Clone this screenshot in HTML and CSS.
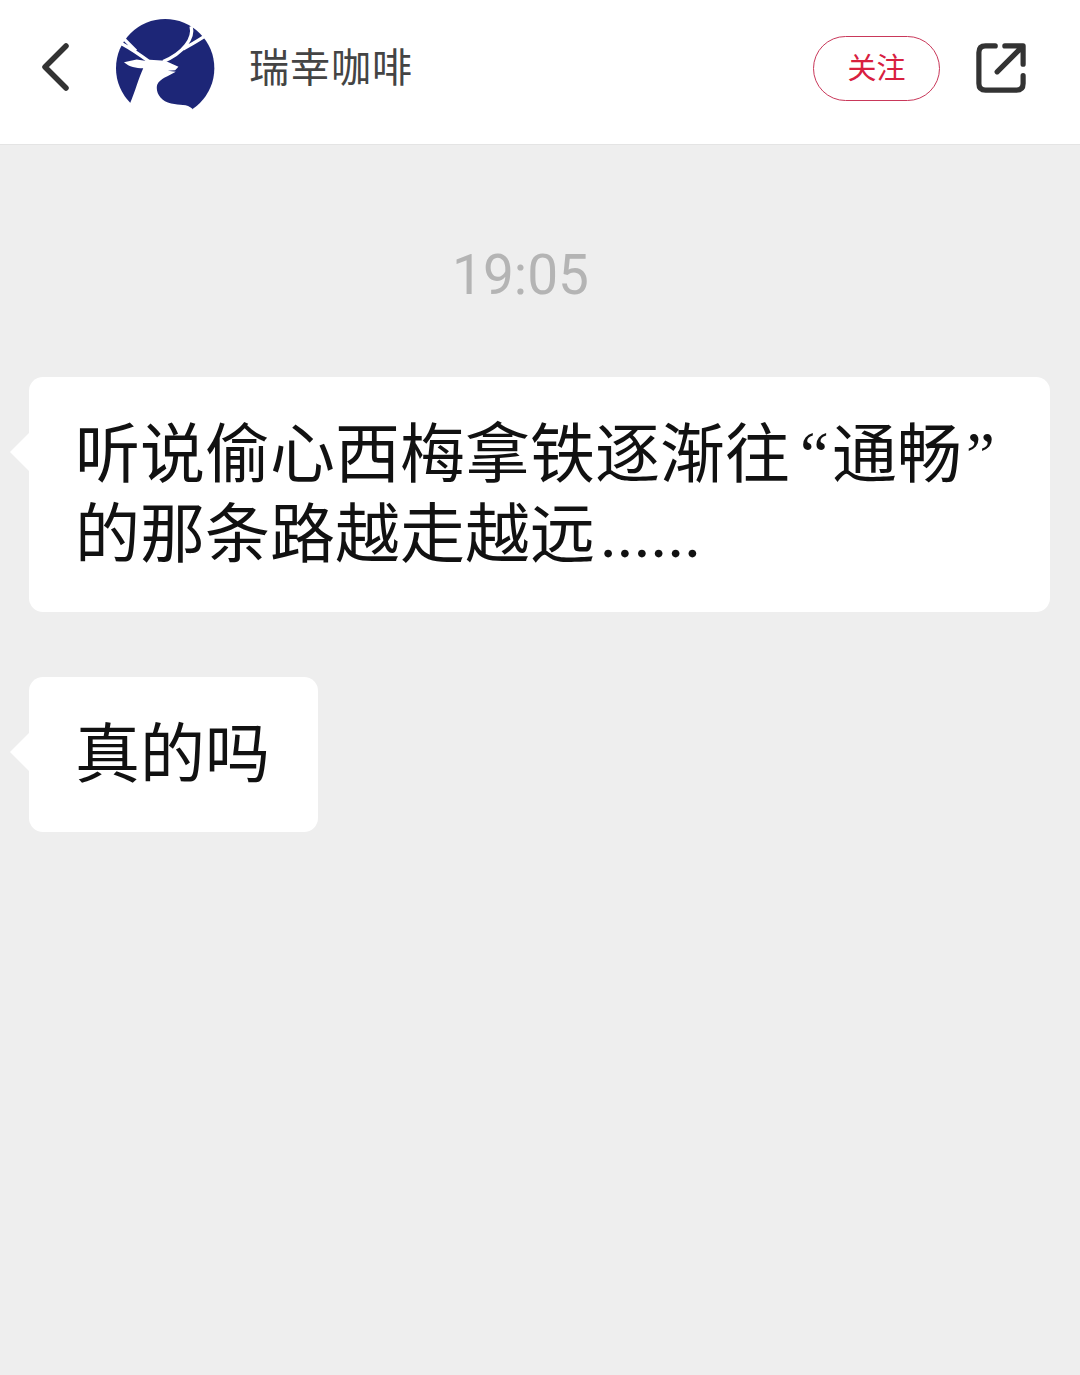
FILE: index.html
```html
<!DOCTYPE html>
<html lang="zh">
<head>
<meta charset="utf-8">
<title>瑞幸咖啡</title>
<link rel="stylesheet" href="styles.css">
</head>
<body>
<header class="topbar">
  <svg class="back" viewBox="0 0 40 60" width="40" height="60"><path d="M27 7 L6 28 L27 49" fill="none" stroke="#333" stroke-width="5.5" stroke-linecap="round" stroke-linejoin="round"/></svg>
  <svg class="logo" viewBox="48 42 298 298" width="99" height="99">
    <circle cx="196" cy="190" r="148" fill="#1d2677"/>
    <path d="M64 116 C90 130 120 150 150 172 M72 102 C85 115 95 125 108 138 M274 64 C284 100 250 145 190 170 M312 96 C290 110 270 122 250 132" fill="none" stroke="#fff" stroke-width="10"/>
    <path d="M72 172 L110 164 L135 168 L150 165 L196 168 L236 186 L226 196 L204 198 L228 201 C206 214 180 222 172 240 C166 262 182 290 214 296 C240 302 262 296 278 312 L270 350 L40 350 L90 296 C106 260 116 220 130 190 C108 190 88 186 72 172 Z" fill="#fff"/>
  </svg>
  <span class="name">瑞幸咖啡</span>
  <button class="follow">关注</button>
  <svg class="share" viewBox="0 0 52 52" width="50" height="50"><path d="M20 3 H10 Q3 3 3 10 V42 Q3 49 10 49 H42 Q49 49 49 42 V34" fill="none" stroke="#333" stroke-width="5.4" stroke-linecap="round"/><path d="M22 30 L48 4 M30 3 H49 V22" fill="none" stroke="#333" stroke-width="5.4" stroke-linecap="round" stroke-linejoin="round"/></svg>
</header>
<main class="chat">
  <div class="time">19:05</div>
  <div class="bubble">听说偷心西梅拿铁逐渐往<span class="quote-open">“</span>通畅<span class="quote-close">”</span>的那条路越走越远<span class="dots">......</span></div>
  <div class="bubble">真的吗</div>
</main>
</body>
</html>
```
FILE: styles.css
```css
* { box-sizing: border-box; }
html, body { margin: 0; height: 100%; }
body {
  background: #eeeeee;
  font-family: "Noto Sans CJK SC", "Noto Sans", sans-serif;
  width: 1080px;
  height: 1375px;
  overflow: hidden;
}
.topbar {
  height: 145px;
  background: #fff;
  border-bottom: 1px solid #e4e4e4;
  display: flex;
  align-items: center;
  padding: 0 54px 8px 39px;
}
.back { flex: none; margin-top: 1px; }
.logo { flex: none; margin-left: 37px; }
.name {
  margin-left: 34px;
  margin-bottom: 7px;
  font-size: 40px;
  color: #444;
  letter-spacing: 1px;
  flex: 1;
}
.follow {
  width: 127px;
  height: 65px;
  border: 1px solid #c9385a;
  border-radius: 33px;
  background: #fff;
  color: #d8203f;
  font: inherit;
  font-size: 29px;
  padding: 0 0 4px;
  margin-right: 36px;
}
.share { flex: none; }
.chat {
  padding: 93px 30px 0 29px;
  display: flex;
  flex-direction: column;
  align-items: flex-start;
}
.time {
  align-self: stretch;
  text-align: center;
  padding-right: 38px;
  font-family: "Roboto", sans-serif;
  font-size: 55px;
  line-height: 74px;
  color: #b4b4b4;
  margin-bottom: 65px;
}
.bubble {
  position: relative;
  background: #fff;
  border-radius: 14px;
  padding: 38px 48px 37px 46px;
  font-family: "Liberation Serif", "Noto Sans CJK SC", serif;
  font-size: 65px;
  line-height: 80px;
  color: #111;
  margin-bottom: 65px;
}
.quote-open { padding: 0 3px 0 10px; }
.quote-close { padding: 0 5px 0 4px; }
.dots {
  letter-spacing: 0.6px;
  margin-left: 5px;
}
.bubble::before {
  content: "";
  position: absolute;
  left: -19px;
  top: 56px;
  width: 38px;
  height: 38px;
  background: #fff;
  clip-path: polygon(0 50%, 50% 0, 50% 100%);
}
```
